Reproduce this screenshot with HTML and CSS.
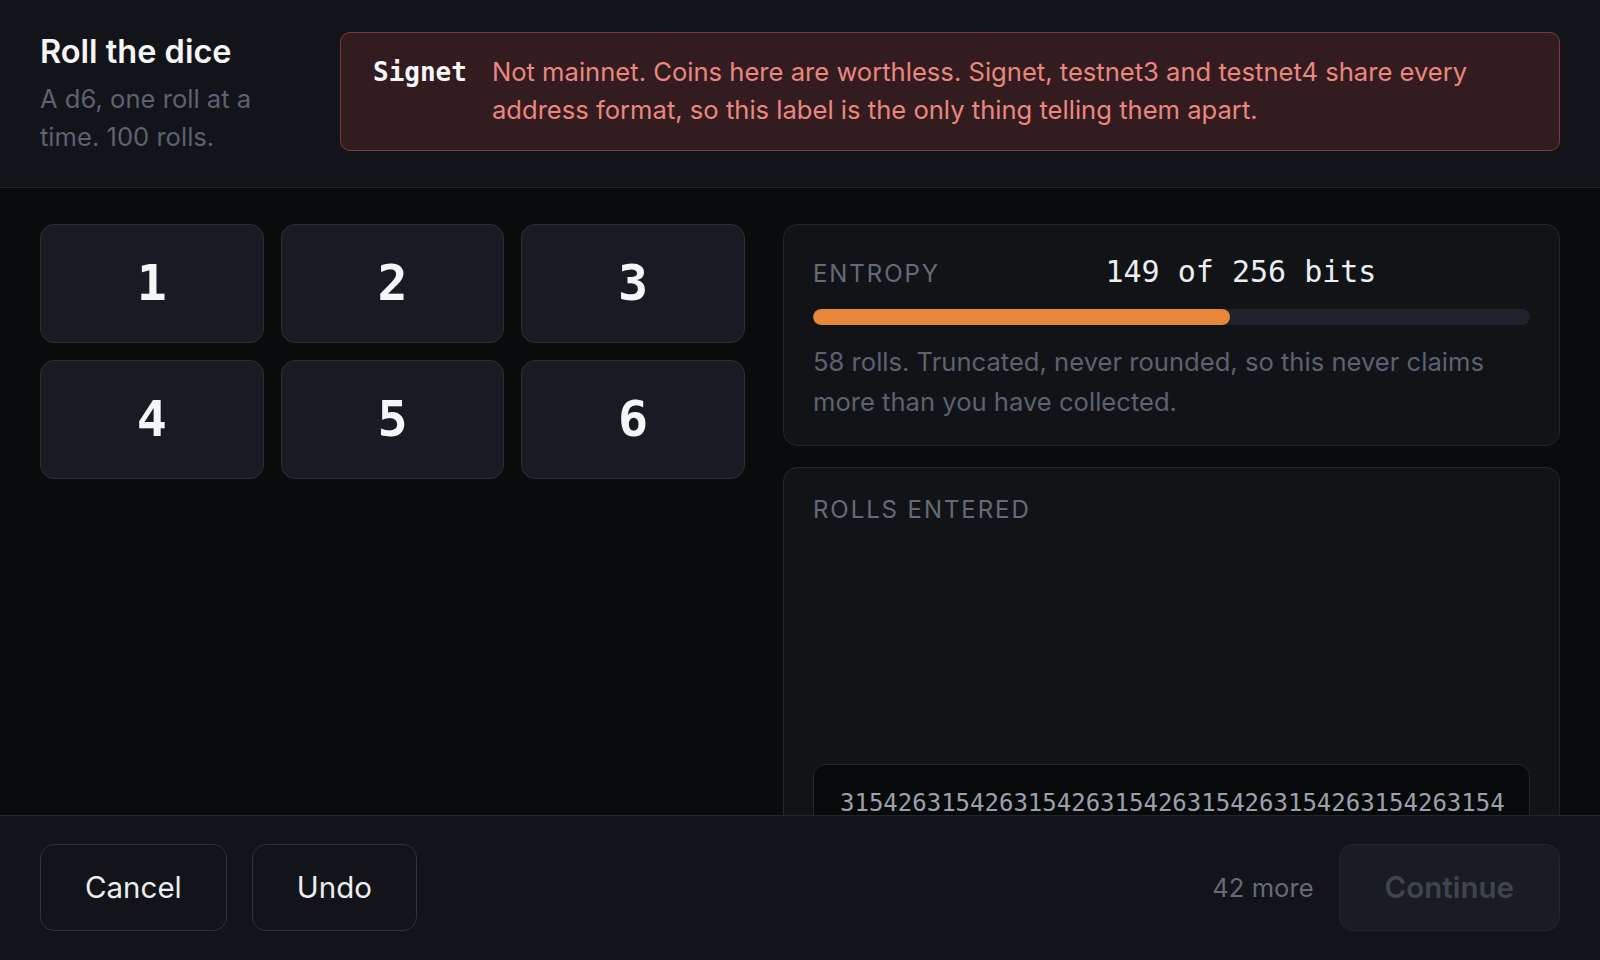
FILE: index.html
```html
<!DOCTYPE html>
<html lang="en">
<head>
<meta charset="utf-8">
<title>Roll the dice</title>
<link rel="stylesheet" href="styles.css">
</head>
<body>
<div class="app">
  <header class="top">
    <div class="intro">
      <h1 class="title">Roll the dice</h1>
      <p class="subtitle">A d6, one roll at a time. 100 rolls.</p>
    </div>
    <div class="notice">
      <span class="net">Signet</span>
      <p class="notice-text">Not mainnet. Coins here are worthless. Signet, testnet3 and testnet4 share every address format, so this label is the only thing telling them apart.</p>
    </div>
  </header>

  <main class="body">
    <div class="layout">
      <div class="dice">
        <button class="die">1</button>
        <button class="die">2</button>
        <button class="die">3</button>
        <button class="die">4</button>
        <button class="die">5</button>
        <button class="die">6</button>
      </div>
      <div class="side">
        <section class="card entropy">
          <div class="entropy-row">
            <span class="label">Entropy</span>
            <span class="value">149 of 256 bits</span>
          </div>
          <div class="bar"><div class="fill" style="width:58.2%"></div></div>
          <p class="desc">58 rolls. Truncated, never rounded, so this never claims more than you have collected.</p>
        </section>
        <section class="card rolls">
          <span class="label">Rolls entered</span>
          <div class="rolls-box">3154263154263154263154263154263154263154263154263154263154</div>
        </section>
      </div>
    </div>
  </main>

  <footer class="bottom">
    <div class="actions">
      <button class="btn">Cancel</button>
      <button class="btn">Undo</button>
    </div>
    <div class="progress-actions">
      <span class="remaining">42 more</span>
      <button class="btn btn-primary" disabled>Continue</button>
    </div>
  </footer>
</div>
</body>
</html>
```

FILE: styles.css
```css
* { box-sizing: border-box; }

html, body {
  margin: 0;
  padding: 0;
  height: 100%;
  background: #0a0b0d;
  font-family: Inter, "Noto Sans", sans-serif;
  color: #e8eaed;
}

.app {
  height: 960px;
  display: flex;
  flex-direction: column;
  overflow: hidden;
}

/* Header */
.top {
  display: flex;
  align-items: flex-start;
  gap: 40px;
  padding: 32px 40px 30px;
  background: #131419;
  border-bottom: 1px solid #22252c;
  flex: none;
}

.intro {
  width: 260px;
  flex: none;
}

.title {
  margin: 0;
  font-size: 32.5px;
  line-height: 40px;
  font-weight: 600;
  color: #f5f6f8;
}

.subtitle {
  margin: 8px 0 0;
  font-size: 25.6px;
  line-height: 38.4px;
  color: #5b6270;
}

.notice {
  flex: 1;
  display: flex;
  align-items: flex-start;
  gap: 25px;
  padding: 20px 32px;
  background: #321c20;
  border: 1px solid #7c3a3a;
  border-radius: 10px;
}

.net {
  flex: none;
  font-family: "DejaVu Sans Mono", monospace;
  font-weight: 700;
  font-size: 26px;
  line-height: 38.4px;
  color: #f5f6f8;
}

.notice-text {
  margin: 0;
  font-size: 25.6px;
  line-height: 38.4px;
  color: #ea877f;
}

/* Body */
.body {
  flex: 1;
  min-height: 0;
  overflow: hidden;
  background: #0a0b0d;
}

.layout {
  display: grid;
  grid-template-columns: 705px 1fr;
  gap: 38px;
  align-items: start;
  padding: 36px 40px;
}

.dice {
  display: grid;
  grid-template-columns: repeat(3, 1fr);
  gap: 17px;
}

.die {
  height: 119px;
  background: #181b22;
  border: 1px solid #2b2f38;
  border-radius: 14px;
  font-family: "DejaVu Sans Mono", monospace;
  font-weight: 700;
  font-size: 50px;
  color: #f5f6f8;
  padding: 0;
  cursor: pointer;
}

.side {
  display: flex;
  flex-direction: column;
  gap: 21px;
}

.card {
  background: #121317;
  border: 1px solid #22252c;
  border-radius: 14px;
}

.label {
  font-size: 24px;
  letter-spacing: 0.08em;
  text-transform: uppercase;
  color: #646b78;
}

.entropy {
  padding: 29px 29px 23px;
}

.entropy-row {
  display: flex;
  align-items: baseline;
  gap: 12px;
}

.value {
  flex: 1;
  text-align: center;
  font-family: "DejaVu Sans Mono", monospace;
  font-size: 30px;
  color: #eceef1;
}

.bar {
  margin-top: 20px;
  height: 16px;
  border-radius: 8px;
  background: #1f232b;
  overflow: hidden;
}

.fill {
  height: 100%;
  border-radius: 8px;
  background: #e8863a;
}

.desc {
  margin: 17px 0 0;
  font-size: 25.6px;
  line-height: 40px;
  color: #5b6270;
}

.rolls {
  padding: 27px 29px 30px;
}

.rolls .label {
  display: block;
}

.rolls-box {
  margin-top: 240px;
  padding: 19px 18px 19px 26px;
  background: #08090b;
  border: 1px solid #23272f;
  border-radius: 12px;
  font-family: "DejaVu Sans Mono", monospace;
  font-size: 24px;
  line-height: 38.4px;
  color: #9aa1ad;
  word-break: break-all;
}

/* Footer */
.bottom {
  flex: none;
  display: flex;
  align-items: center;
  justify-content: space-between;
  padding: 28px 40px 29px;
  background: #131419;
  border-top: 1px solid #22252c;
}

.actions,
.progress-actions {
  display: flex;
  align-items: center;
  gap: 25px;
}

.btn {
  font-family: Inter, "Noto Sans", sans-serif;
  font-size: 29.5px;
  line-height: 43px;
  padding: 21px 44px;
  background: #131419;
  color: #eceef1;
  border: 1px solid #2e323b;
  border-radius: 14px;
  cursor: pointer;
}

.btn-primary {
  font-weight: 600;
  padding: 21px 45px;
  background: #191c23;
  border-color: #22262e;
  color: #3f4451;
  cursor: default;
}

.remaining {
  font-size: 25.6px;
  color: #646b78;
}
```
